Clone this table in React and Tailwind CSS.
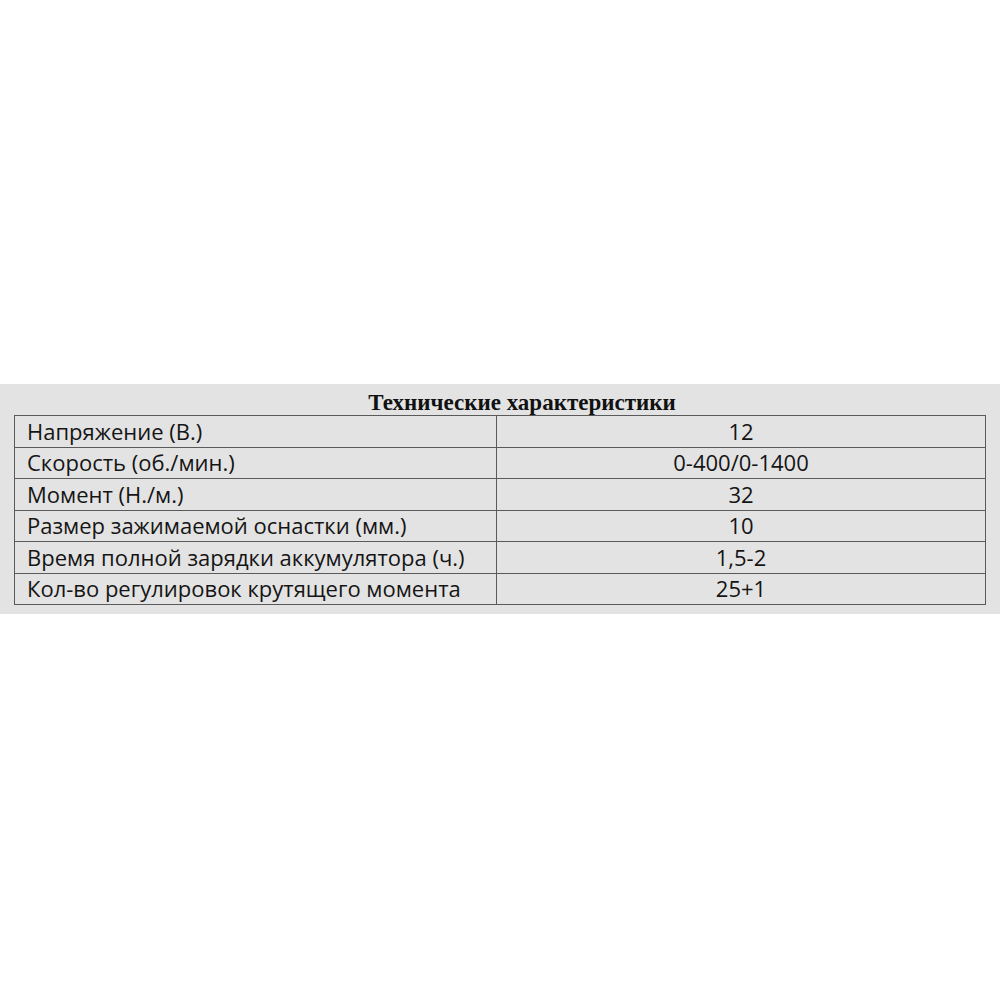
export default function App() {
  const rows = [
    ["Напряжение (В.)", "12"],
    ["Скорость (об./мин.)", "0-400/0-1400"],
    ["Момент (Н./м.)", "32"],
    ["Размер зажимаемой оснастки (мм.)", "10"],
    ["Время полной зарядки аккумулятора (ч.)", "1,5-2"],
    ["Кол-во регулировок крутящего момента", "25+1"],
  ];
  return (
    <div className="w-[1000px] h-[1000px] bg-white flex flex-col">
      <div className="h-[384px]" />
      <div className="h-[230px] bg-[#e3e3e3] pl-[14px] pr-[14px] pt-[6px]">
        <div className="h-[25px] flex justify-center items-end pl-[44px] text-[23px] leading-[25px] font-bold text-[#111] [font-family:'Liberation_Serif',serif]">
          Технические характеристики
        </div>
        <div className="border-t border-l border-[#5a5a5a] [font-family:'Open_Sans',sans-serif] text-[#151515] text-[22px]">
          {rows.map(([a, b], i) => (
            <div key={i} className="flex h-[31.5px] border-b border-[#5a5a5a]">
              <div className="w-[482px] border-r border-[#5a5a5a] pl-[12px] flex items-center whitespace-nowrap">{a}</div>
              <div className="flex-1 border-r border-[#5a5a5a] flex items-center justify-center">{b}</div>
            </div>
          ))}
        </div>
      </div>
    </div>
  );
}
